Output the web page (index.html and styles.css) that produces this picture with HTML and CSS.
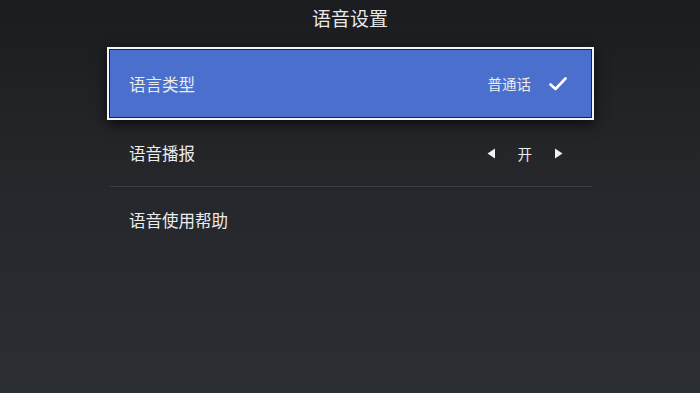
FILE: index.html
```html
<!DOCTYPE html>
<html lang="zh">
<head>
<meta charset="utf-8">
<link rel="stylesheet" href="styles.css">
</head>
<body>
<div class="page">
  <div class="title">语音设置</div>
  <div class="list">
    <div class="row selected">
      <span class="label">语言类型</span>
      <span class="value">
        <span>普通话</span>
        <svg class="check" width="18" height="14" viewBox="0 0 18 14"><path d="M1.5 7.5 L6.5 12 L16.5 1.5" fill="none" stroke="#fff" stroke-width="2.6" stroke-linecap="round" stroke-linejoin="round"/></svg>
      </span>
    </div>
    <div class="row">
      <span class="label">语音播报</span>
      <span class="value switch">
        <svg width="9" height="11" viewBox="0 0 9 11"><path d="M8 0.5 L0.5 5.5 L8 10.5 Z" fill="#f2f2f2"/></svg>
        <span>开</span>
        <svg width="9" height="11" viewBox="0 0 9 11"><path d="M1 0.5 L8.5 5.5 L1 10.5 Z" fill="#f2f2f2"/></svg>
      </span>
    </div>
    <div class="divider"></div>
    <div class="row">
      <span class="label">语音使用帮助</span>
    </div>
  </div>
</div>
</body>
</html>
```
FILE: styles.css
```css
html, body {
  margin: 0;
  padding: 0;
}
body {
  width: 700px;
  height: 393px;
  overflow: hidden;
  background: linear-gradient(180deg, #1b1c1f 0%, #24262a 40%, #2b2e33 100%);
  font-family: "Noto Sans CJK SC", "Noto Sans", sans-serif;
  color: #ececec;
}
.page {
  display: flex;
  flex-direction: column;
  align-items: center;
}
.title {
  height: 36px;
  line-height: 36px;
  font-size: 19px;
  color: #e8e8e8;
  text-align: center;
}
.list {
  width: 487px;
  margin-top: 11px;
  margin-left: 1px;
  display: flex;
  flex-direction: column;
}
.row {
  height: 66px;
  display: flex;
  align-items: center;
  justify-content: space-between;
  padding: 0 31px 0 22px;
  font-size: 16.5px;
  box-sizing: border-box;
}
.row.selected {
  height: 73px;
  background: #4a6fcc;
  border: 2px solid #f4f4f4;
  box-shadow: inset 0 0 0 1px #1d2230, 0 4px 12px rgba(0, 0, 0, 0.7);
  padding: 0 25px 0 20px;
}
.value {
  display: flex;
  align-items: center;
  font-size: 14.5px;
  gap: 18px;
}
.switch {
  gap: 22px;
}
.check {
  display: block;
}
.divider {
  height: 1px;
  background: #3b3e44;
  margin: 0 2px 0 3px;
}
```
